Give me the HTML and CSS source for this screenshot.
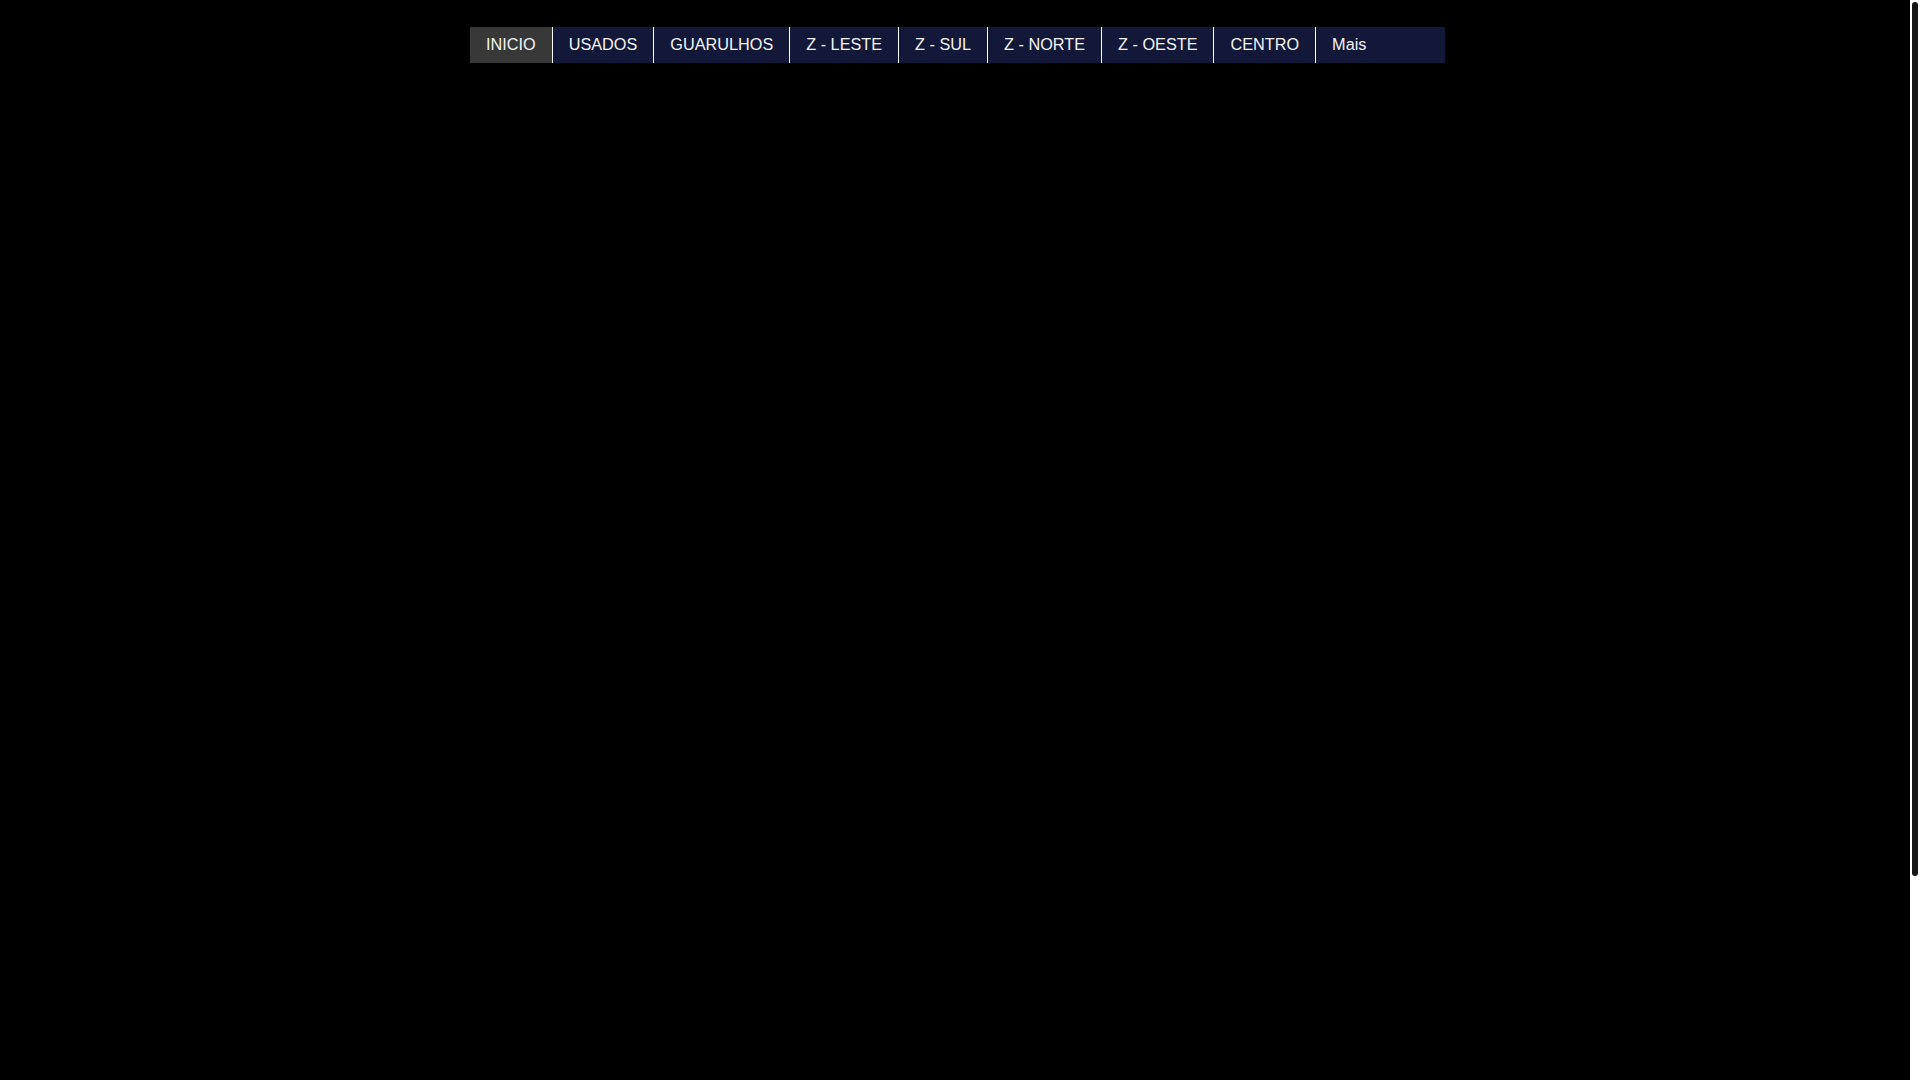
FILE: index.html
```html
<!DOCTYPE html>
<html lang="pt">
<head>
<meta charset="utf-8">
<title>Inicio</title>
<link rel="stylesheet" href="styles.css">
</head>
<body>
<div class="viewport">
  <div class="page">
    <nav class="menu">
      <a class="item active" href="#">INICIO</a>
      <a class="item" href="#">USADOS</a>
      <a class="item" href="#">GUARULHOS</a>
      <a class="item" href="#">Z - LESTE</a>
      <a class="item" href="#">Z - SUL</a>
      <a class="item" href="#">Z - NORTE</a>
      <a class="item" href="#">Z - OESTE</a>
      <a class="item" href="#">CENTRO</a>
      <a class="item more" href="#">Mais</a>
    </nav>
  </div>
</div>
<div class="scrollbar"><div class="thumb"></div></div>
</body>
</html>
```
FILE: styles.css
```css
html {
  background: #000;
  overflow: hidden;
}
body {
  margin: 0;
  height: 100vh;
  display: flex;
  background: #000;
  font-family: "Liberation Sans", Arial, sans-serif;
  overflow: hidden;
}
.viewport {
  flex: 1;
  min-width: 0;
}
.page {
  width: 980px;
  margin: 0 auto;
  padding-top: 27px;
}
.menu {
  margin-left: 5px;
  display: flex;
  height: 36px;
  background: #141838;
}
.item {
  display: block;
  padding: 0 16px;
  line-height: 34px;
  font-size: 16.25px;
  color: #f2f2f2;
  text-decoration: none;
  border-right: 1px solid #fff;
  white-space: nowrap;
}
.item.active {
  background: #383838;
}
.item.more {
  border-right: none;
  flex: 1;
}
.scrollbar {
  width: 10px;
  flex: none;
  background: #fff;
  padding: 2px;
  box-sizing: border-box;
}
.thumb {
  height: 874px;
  background: #161616;
  border-radius: 3px;
}
```
